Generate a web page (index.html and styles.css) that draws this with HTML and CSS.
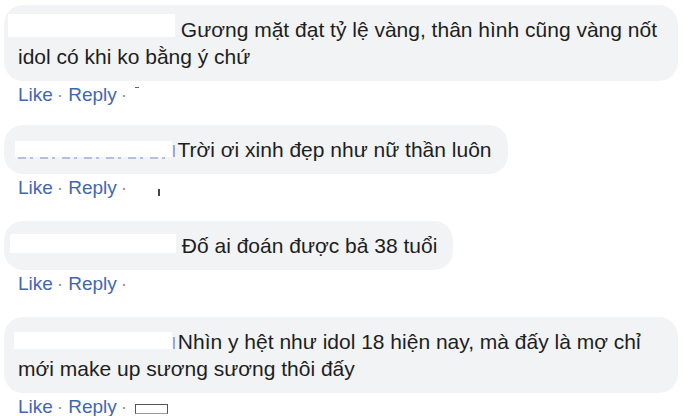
FILE: index.html
```html
<!DOCTYPE html>
<html>
<head>
<meta name="viewport" content="width=device-width, initial-scale=1.0"/>
<link rel="stylesheet" href="styles.css">
</head>
<body>

  <div class="comments">

    <div class="comment">
      <div class="bubble"><span class="name nameOne"></span> Gương mặt đạt tỷ lệ vàng, thân hình cũng vàng nốt idol có khi ko bằng ý chứ</div>
      <div class="actions">
        <a class="link">Like</a><span class="dot">·</span><a class="link">Reply</a><span class="dot">·</span><span class="stampDash"></span>
      </div>
    </div>

    <div class="comment">
      <div class="bubble"><span class="name nameTwo peek"></span> Trời ơi xinh đẹp như nữ thần luôn</div>
      <div class="actions">
        <a class="link">Like</a><span class="dot">·</span><a class="link">Reply</a><span class="dot">·</span><span class="stampTick"></span>
      </div>
    </div>

    <div class="comment">
      <div class="bubble"><span class="name nameThree"></span> Đố ai đoán được bả 38 tuổi</div>
      <div class="actions">
        <a class="link">Like</a><span class="dot">·</span><a class="link">Reply</a><span class="dot">·</span>
      </div>
    </div>

    <div class="comment">
      <div class="bubble"><span class="name nameFour tick"></span> Nhìn y hệt như idol 18 hiện nay, mà đấy là mợ chỉ mới make up sương sương thôi đấy</div>
      <div class="actions">
        <a class="link">Like</a><span class="dot">·</span><a class="link">Reply</a><span class="dot">·</span><span class="stampBox"></span>
      </div>
    </div>

  </div>

</body>
</html>
```

FILE: styles.css
```css
body {
    margin: 0;
    background-color: #ffffff;
    font-family: "Liberation Sans", Arial, sans-serif;
}

.comments {
    padding: 5px 0 0 4px;
    width: 674px;
}

.comment {
    margin-bottom: 24px;
}
.comment:first-child {
    margin-bottom: 21px;
}
.comment:last-child {
    margin-bottom: 0;
}

.bubble {
    display: inline-block;
    background-color: #f2f3f5;
    border-radius: 19px;
    padding: 11px 16px 11px 14px;
    font-size: 21px;
    line-height: 27px;
    color: #1c1e21;
}

/* the hidden names, white boxes */
.name {
    display: inline-block;
    position: relative;
    background-color: #ffffff;
    vertical-align: baseline;
}
.nameOne {
    width: 167px;
    height: 23px;
    margin: -4px 0 0 -10px;
}
.nameTwo {
    width: 157px;
    height: 16px;
    margin-left: -3px;
}
.nameThree {
    width: 166px;
    height: 19px;
    margin-left: -8px;
}
.nameFour {
    width: 158px;
    height: 17px;
    margin-left: -4px;
}

.peek::after {
    content: "";
    position: absolute;
    left: 3px;
    right: 2px;
    bottom: -2px;
    height: 2px;
    background: repeating-linear-gradient(90deg, #b3c0e2 0 8px, transparent 8px 12px, #b3c0e2 12px 15px, transparent 15px 22px);
}
.peek::before, .tick::before {
    content: "";
    position: absolute;
    right: -3px;
    bottom: 0;
    width: 2px;
    height: 12px;
    background-color: #9aabd8;
}

.actions {
    margin-top: 5px;
    padding-left: 14px;
    font-size: 19px;
    line-height: 18px;
    height: 18px;
}

.link {
    color: #4267b2;
}

.dot {
    color: #8d949e;
    margin: 0 5px 0 4px;
}

.stampDash {
    display: inline-block;
    width: 4px;
    height: 1px;
    background-color: #666;
    vertical-align: 13px;
    margin-left: 3px;
}

.stampTick {
    display: inline-block;
    width: 2px;
    height: 7px;
    background-color: #444;
    margin-left: 26px;
    vertical-align: -2px;
}

.stampBox {
    display: inline-block;
    width: 31px;
    height: 8px;
    border: 1px solid #555;
    border-bottom-color: #999;
    vertical-align: -1px;
    margin-left: 3px;
}
```
